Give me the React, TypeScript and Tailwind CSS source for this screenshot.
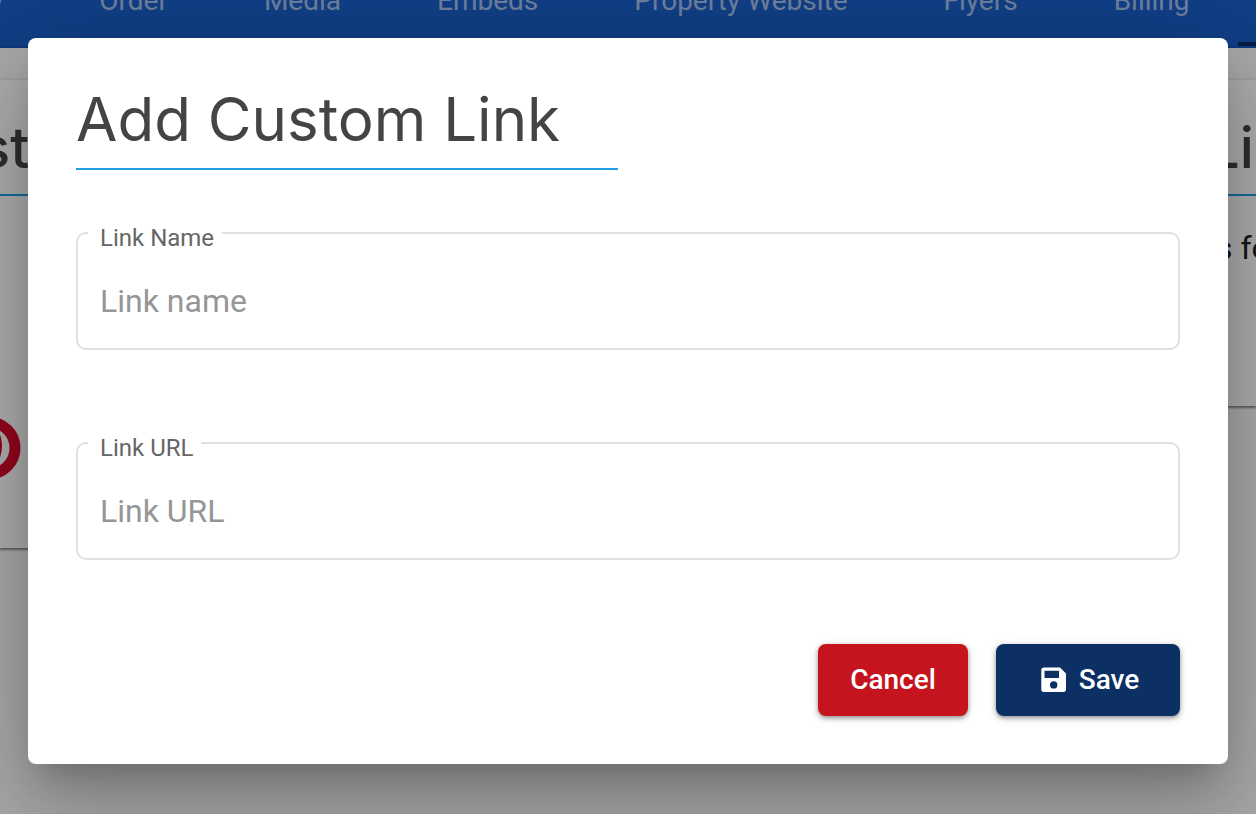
import React from "react";

const tabs = ["y", "Order", "Media", "Embeds", "Property Website", "Flyers", "Billing"];

const fields = [
  { id: "link-name", label: "Link Name", placeholder: "Link name" },
  { id: "link-url", label: "Link URL", placeholder: "Link URL" },
];

const SaveIcon = () => {
  return (
    <svg width="26" height="26" viewBox="0 0 26 26" fill="currentColor" aria-hidden="true">
      <path
        fillRule="evenodd"
        d="M3 0.5H19L25 6.5V22.3A2.7 2.7 0 0 1 22.3 25H3A2.7 2.7 0 0 1 0.3 22.3V3.2A2.7 2.7 0 0 1 3 0.5ZM3.5 3.8V11H18V3.8ZM12.7 14.2A3.7 3.7 0 1 0 12.7 21.6A3.7 3.7 0 1 0 12.7 14.2Z"
      />
    </svg>
  );
};

const TabBar = () => {
  return (
    <nav className="flex h-12 -ml-[58px] bg-[#1a5cc4] border-b-2 border-[#1753b8] text-[28px] leading-8 text-white/60 whitespace-nowrap">
      {tabs.map((tab) => (
        <a key={tab} href="#" className="-mt-[15px] shrink-0 px-12">
          {tab}
        </a>
      ))}
      <span className="w-40 shrink-0 self-end h-1 bg-[#0b2f66]" />
    </nav>
  );
};

const Background = () => {
  return (
    <div className="min-h-screen overflow-hidden bg-[#fafafa]">
      <TabBar />
      <div className="flex items-start justify-between pt-8">
        <section className="w-2/5 h-[468px] bg-white shadow-[0_2px_2px_rgba(0,0,0,0.4),0_0_4px_rgba(0,0,0,0.15)]">
          <h2 className="-ml-5 h-[116px] pt-8 border-b-2 border-[#1e9fe3] font-['Inter',sans-serif] text-[56px] leading-[72px] font-medium text-[#444]">
            st
          </h2>
          <svg className="mt-[222px] w-[21px] h-[60px]" viewBox="0 0 21 60" fill="none">
            <circle cx="-11" cy="30" r="26" stroke="#d90a2c" strokeWidth="11" />
            <ellipse cx="-11" cy="28" rx="13" ry="21" fill="#d90a2c" />
          </svg>
        </section>
        <section className="w-12 h-[326px] bg-white shadow-[0_2px_2px_rgba(0,0,0,0.4),0_0_4px_rgba(0,0,0,0.15)]">
          <h2 className="h-[116px] pt-8 border-b-2 border-[#1e9fe3] font-['Inter',sans-serif] text-[56px] leading-[72px] font-medium text-[#444]">
            Li
          </h2>
          <p className="pl-2 pt-8 text-[32px] leading-10 text-[#212121] whitespace-nowrap">s fo</p>
        </section>
      </div>
    </div>
  );
};

const Dialog = () => {
  return (
    <div
      role="dialog"
      aria-labelledby="dialog-title"
      className="w-full p-12 bg-white rounded-lg shadow-[0_22px_30px_-14px_rgba(0,0,0,0.2),0_48px_76px_6px_rgba(0,0,0,0.14),0_18px_92px_16px_rgba(0,0,0,0.12)]"
    >
      <h1
        id="dialog-title"
        className="w-[542px] max-w-full h-[84px] border-b-2 border-[#1e9fe3] font-['Inter',sans-serif] text-[60px] leading-[66px] text-[#444]"
      >
        Add Custom Link
      </h1>
      <form className="mt-[62px]" onSubmit={(e) => e.preventDefault()}>
        <div className="flex flex-col gap-[92px]">
          {fields.map((field) => (
            <div key={field.id} className="relative">
              <input
                id={field.id}
                type="text"
                placeholder={field.placeholder}
                className="block w-full h-[118px] px-[22px] pt-5 pb-0 rounded-[10px] border-2 border-[#e0e0e0] text-[32px] text-[#212121] placeholder:text-[#969696] outline-none"
              />
              <label
                htmlFor={field.id}
                className="absolute left-3 -top-2 pl-3 pr-2 bg-white text-2xl leading-7 text-[#666]"
              >
                {field.label}
              </label>
            </div>
          ))}
        </div>
        <div className="mt-[84px] flex justify-end gap-7 text-[28px] font-medium text-white">
          <button
            type="button"
            className="w-[150px] h-[72px] rounded-lg bg-[#c5141d] shadow-[0_2px_4px_rgba(0,0,0,0.35),0_2px_10px_rgba(0,0,0,0.15)]"
          >
            Cancel
          </button>
          <button
            type="submit"
            className="flex items-center justify-center gap-3 w-[184px] h-[72px] pl-1 rounded-lg bg-[#0c2f64] shadow-[0_2px_4px_rgba(0,0,0,0.35),0_2px_10px_rgba(0,0,0,0.15)]"
          >
            <SaveIcon />
            Save
          </button>
        </div>
      </form>
    </div>
  );
};

const App = () => {
  return (
    <main className="relative overflow-hidden font-['Roboto',sans-serif]">
      <Background />
      <div className="absolute inset-0 flex items-start px-7 pt-[38px] bg-black/32">
        <Dialog />
      </div>
    </main>
  );
};

export default App;
